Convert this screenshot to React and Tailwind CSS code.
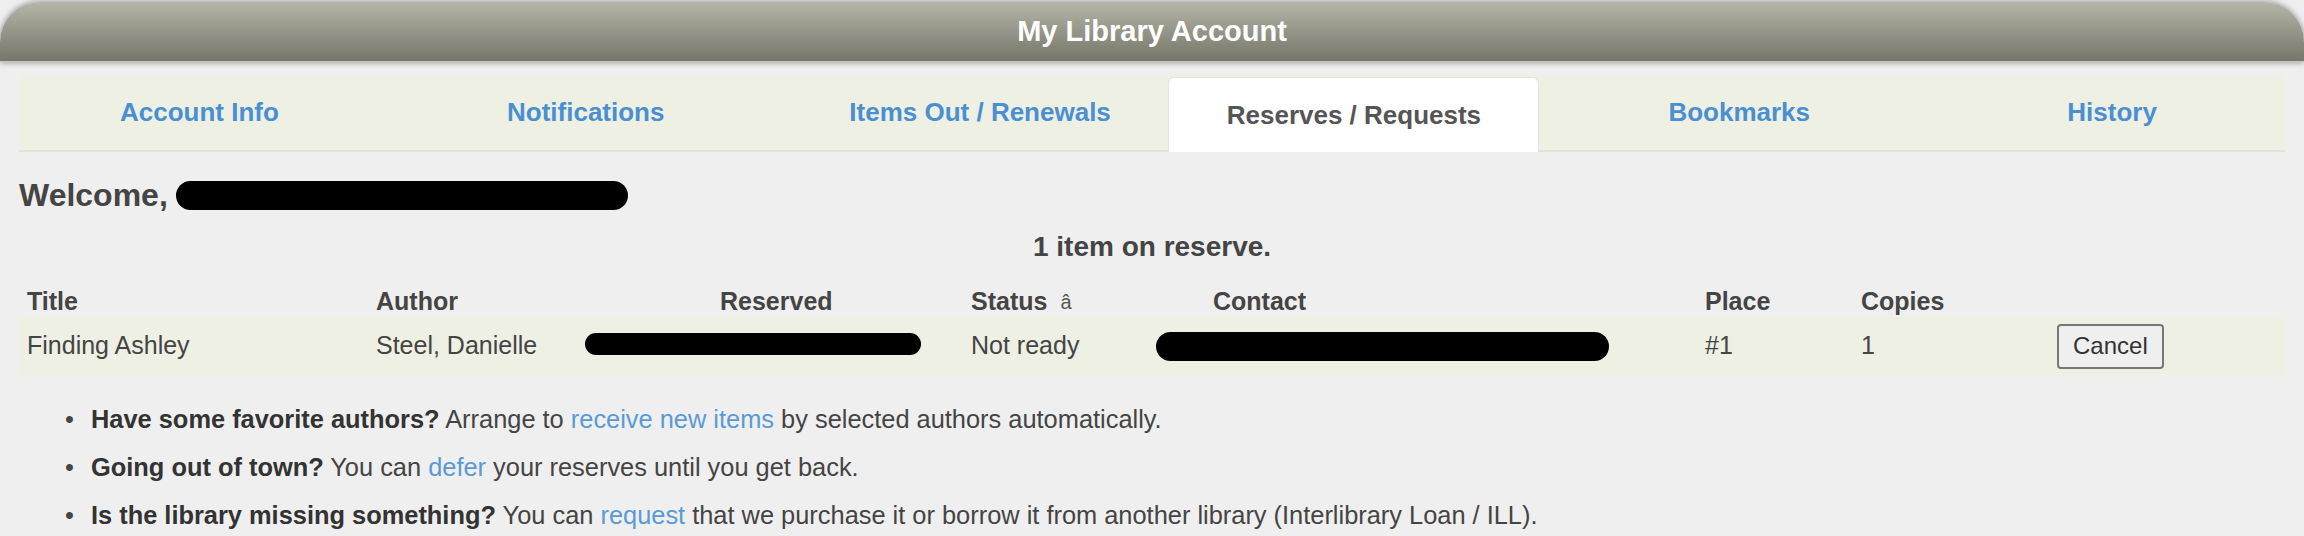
import React from "react";

const tabs = [
  { label: "Account Info", w: "w-[361px]" },
  { label: "Notifications", w: "w-[412px]" },
  { label: "Items Out / Renewals", w: "w-[377px]" },
  { label: "Reserves / Requests", w: "w-[371px]", active: true },
  { label: "Bookmarks", w: "w-[400px]" },
  { label: "History", w: "w-[346px]" },
];

const Redacted = ({ className }) => (
  <span className={`block rounded-full bg-black ${className}`} />
);

const Tip = ({ children }) => (
  <li className="flex">
    <span className="w-[26px] shrink-0">•</span>
    <span>{children}</span>
  </li>
);

const App = () => {
  return (
    <div
      className="w-[2304px] h-[536px] overflow-hidden bg-[#efefef] pt-[2px] text-[#444]"
      style={{ fontFamily: '"Liberation Sans", Arial, sans-serif' }}
    >
      {/* Title bar */}
      <div className="h-[60px] rounded-t-[40px] bg-gradient-to-b from-[#b5b6a8] to-[#76766a] border-b border-[#c8c8be] shadow-[0_0_6px_rgba(0,0,0,0.45)] flex items-center justify-center">
        <h1 className="text-[29px] font-bold text-white">My Library Account</h1>
      </div>

      <div className="px-[19px]">
        {/* Tabs */}
        <div className="mt-[13px] h-[77px] flex bg-[#eef0e4] border-b-2 border-[#e2e2dc]">
          {tabs.map((t) =>
            t.active ? (
              <div
                key={t.label}
                className={`${t.w} mt-[2px] h-[75px] bg-white border border-b-0 border-[#e2e2e2] rounded-t-[6px] flex items-center justify-center text-[26px] font-bold text-[#555]`}
              >
                {t.label}
              </div>
            ) : (
              <a
                key={t.label}
                href="#"
                className={`${t.w} flex items-center justify-center text-[26px] font-bold text-[#4a8fd0]`}
              >
                {t.label}
              </a>
            )
          )}
        </div>

        {/* Welcome */}
        <div className="mt-[23px] h-[40px] flex items-center">
          <span className="text-[32px] font-bold text-[#444]">Welcome,</span>
          <Redacted className="ml-[8px] w-[452px] h-[29px]" />
        </div>

        <div className="mt-[14px] h-[36px] flex items-center justify-center text-[28px] font-bold text-[#444]">
          1 item on reserve.
        </div>

        {/* Reserves table */}
        <div className="mt-[18px] text-[25px]">
          <div className="h-[34px] grid grid-cols-[349px_209px_386px_185px_549px_156px_196px_237px] items-center font-bold text-[#444]">
            <div className="pl-2">Title</div>
            <div className="pl-2">Author</div>
            <div className="pl-[143px]">Reserved</div>
            <div className="pl-2 flex items-center">
              Status
              <span className="ml-[13px] font-normal text-[20px] text-[#555]">â</span>
            </div>
            <div className="pl-[65px]">Contact</div>
            <div className="pl-2">Place</div>
            <div className="pl-2">Copies</div>
            <div />
          </div>
          <div className="h-[58px] bg-[#eef0e4] grid grid-cols-[349px_209px_386px_185px_549px_156px_196px_237px] items-center">
            <div className="pl-2">Finding Ashley</div>
            <div className="pl-2">Steel, Danielle</div>
            <div className="pl-2">
              <Redacted className="w-[336px] h-[22px] -mt-[4px]" />
            </div>
            <div className="pl-2">Not ready</div>
            <div className="pl-2">
              <Redacted className="w-[453px] h-[29px]" />
            </div>
            <div className="pl-2">#1</div>
            <div className="pl-2">1</div>
            <div className="pl-2">
              <button className="h-[45px] px-[14px] bg-[#efefef] border-2 border-[#777] rounded-[4px] text-[24px] text-[#333]">
                Cancel
              </button>
            </div>
          </div>
        </div>

        {/* Tips */}
        <ul className="mt-[20px] pl-[46px] text-[25.4px] leading-[48px] text-[#444]">
          <Tip>
            <b className="text-[#333]">Have some favorite authors?</b> Arrange to{" "}
            <a href="#" className="text-[#5a9bd5]">receive new items</a> by selected authors automatically.
          </Tip>
          <Tip>
            <b className="text-[#333]">Going out of town?</b> You can{" "}
            <a href="#" className="text-[#5a9bd5]">defer</a> your reserves until you get back.
          </Tip>
          <Tip>
            <b className="text-[#333]">Is the library missing something?</b> You can{" "}
            <a href="#" className="text-[#5a9bd5]">request</a> that we purchase it or borrow it from another library (Interlibrary Loan / ILL).
          </Tip>
        </ul>
      </div>
    </div>
  );
};

export default App;
